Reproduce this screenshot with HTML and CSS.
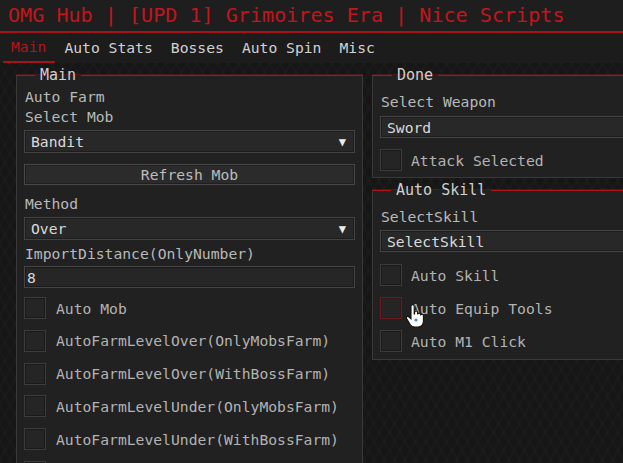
FILE: index.html
```html
<!DOCTYPE html>
<html>
<head>
<meta charset="utf-8">
<link rel="stylesheet" href="styles.css">
</head>
<body>
<div class="app">
  <header class="titlebar">OMG Hub | [UPD 1] Grimoires Era | Nice Scripts</header>
  <nav class="tabs">
    <span class="tab active">Main</span>
    <span class="tab">Auto Stats</span>
    <span class="tab">Bosses</span>
    <span class="tab">Auto Spin</span>
    <span class="tab">Misc</span>
  </nav>
  <main class="content">
    <fieldset class="panel panel-main">
      <legend class="legend">Main</legend>
      <div class="label">Auto Farm</div>
      <div class="label">Select Mob</div>
      <div class="dropdown mt3"><span>Bandit</span><span class="arrow">&#9660;</span></div>
      <div class="button mt11">Refresh Mob</div>
      <div class="label mt9">Method</div>
      <div class="dropdown mt3"><span>Over</span><span class="arrow">&#9660;</span></div>
      <div class="label mt4">ImportDistance(OnlyNumber)</div>
      <div class="input mt2">8</div>
      <div class="checklist mt9">
        <div class="check"><span class="box"></span><span>Auto Mob</span></div>
        <div class="check"><span class="box"></span><span>AutoFarmLevelOver(OnlyMobsFarm)</span></div>
        <div class="check"><span class="box"></span><span>AutoFarmLevelOver(WithBossFarm)</span></div>
        <div class="check"><span class="box"></span><span>AutoFarmLevelUnder(OnlyMobsFarm)</span></div>
        <div class="check"><span class="box"></span><span>AutoFarmLevelUnder(WithBossFarm)</span></div>
        <div class="check"><span class="box"></span></div>
      </div>
    </fieldset>
    <div class="col-right">
      <fieldset class="panel panel-done">
        <legend class="legend legend-done">Done</legend>
        <div class="label">Select Weapon</div>
        <div class="dropdown mt4 short"><span>Sword</span></div>
        <div class="checklist mt11">
          <div class="check"><span class="box"></span><span>Attack Selected</span></div>
        </div>
      </fieldset>
      <fieldset class="panel panel-skill">
        <legend class="legend">Auto Skill</legend>
        <div class="label">SelectSkill</div>
        <div class="dropdown mt3 short"><span>SelectSkill</span></div>
        <div class="checklist mt12">
          <div class="check"><span class="box"></span><span>Auto Skill</span></div>
          <div class="check hover"><span class="box"></span><span>Auto Equip Tools</span>
            <svg class="cursor" width="20" height="26" viewBox="0 0 20 26">
              <path d="M6 2.2a1.6 1.6 0 0 1 3.2 0V10h.4V8.4a1.5 1.5 0 0 1 3 0V10.6a1.5 1.5 0 0 1 3 0v1a1.4 1.4 0 0 1 2.8 0V17c0 3.5-2.2 6-5.6 6h-3.2c-2.2 0-3.4-1-4.6-2.8L1.6 14.6c-.9-1.3.7-2.8 2-1.8L6 14.8Z" fill="#ffffff" stroke="#111" stroke-width="1.1"/>
              <circle cx="11" cy="16" r="1.6" fill="#3a8fd0"/>
            </svg>
          </div>
          <div class="check"><span class="box"></span><span>Auto M1 Click</span></div>
        </div>
      </fieldset>
    </div>
  </main>
</div>
</body>
</html>
```
FILE: styles.css
```css
html, body {
  margin: 0;
  padding: 0;
  overflow: hidden;
  background: #171717;
}
body {
  font-family: "DejaVu Sans Mono", "Liberation Mono", monospace;
  font-size: 14.7px;
  color: #b8b8b8;
}
.app {
  width: 623px;
  height: 463px;
  overflow: hidden;
  background:
    repeating-linear-gradient(60deg, rgba(255,255,255,0.012) 0 3px, rgba(0,0,0,0) 3px 9px),
    repeating-linear-gradient(-60deg, rgba(255,255,255,0.012) 0 3px, rgba(0,0,0,0) 3px 9px),
    #161616;
}
.titlebar {
  height: 31px;
  line-height: 31px;
  padding-left: 8px;
  font-size: 20.1px;
  color: #c4151d;
  background: #1e1e1e;
  border-bottom: 2px solid #a8121a;
  white-space: nowrap;
}
.tabs {
  display: flex;
  height: 30px;
  padding-left: 3px;
  background: #1c1c1c;
}
.tab {
  padding: 0 9px 0 8px;
  line-height: 30px;
  color: #d2d2d2;
  white-space: nowrap;
}
.tab.active {
  color: #b3141c;
  line-height: 28px;
  border-bottom: 2px solid #a8121a;
}
.tab + .tab {
  margin-left: 1px;
}
.content {
  display: flex;
  gap: 9px;
  padding: 4px 0 0 16px;
  align-items: flex-start;
}
.panel {
  margin: 0;
  border: 1px solid #393939;
  border-top: 1px solid #b3141c;
  background: #212121;
  box-shadow: 0 -1px 0 rgba(179,20,28,0.35);
  display: flex;
  flex-direction: column;
  min-width: 0;
}
.panel-main {
  flex: none;
  width: 347px;
  box-sizing: border-box;
  padding: 4px 7px 8px 7px;
}
.col-right {
  flex: none;
  display: flex;
  flex-direction: column;
  gap: 4px;
}
.panel-done, .panel-skill {
  width: 360px;
  box-sizing: border-box;
  padding: 9px 7px 6px 7px;
}
.panel-skill {
  padding-bottom: 7px;
}
.legend {
  margin-left: 11px;
  padding: 0 5px;
  line-height: 16px;
  height: 16px;
  color: #d0d0d0;
  font-size: 15px;
}
.legend-done {
  margin-left: 12px;
}
.label {
  line-height: 20px;
  height: 20px;
  padding-left: 1px;
  color: #b9b9b9;
  white-space: nowrap;
}
.mt2 { margin-top: 2px; }
.mt3 { margin-top: 3px; }
.mt4 { margin-top: 4px; }
.mt9 { margin-top: 9px; }
.mt11 { margin-top: 11px; }
.mt12 { margin-top: 12px; }
.dropdown {
  height: 23px;
  box-sizing: border-box;
  display: flex;
  align-items: center;
  justify-content: space-between;
  padding: 0 8px 0 6px;
  background: #282828;
  border: 1px solid #434343;
  box-shadow: inset 0 0 0 1px #1d1d1d;
  color: #dadada;
}
.dropdown.short {
  height: 22px;
}
.arrow {
  font-size: 12px;
  color: #ececec;
}
.button {
  height: 21px;
  box-sizing: border-box;
  display: flex;
  align-items: center;
  justify-content: center;
  background: #2b2b2b;
  border: 1px solid #474747;
  box-shadow: inset 0 0 0 1px #1f1f1f;
  color: #bdbdbd;
}
.input {
  height: 22px;
  box-sizing: border-box;
  display: flex;
  align-items: center;
  padding-left: 2px;
  background: #262626;
  border: 1px solid #444;
  box-shadow: inset 0 0 0 1px #1b1b1b;
  color: #d6d6d6;
}
.checklist {
  display: flex;
  flex-direction: column;
  gap: 10.8px;
}
.panel-done .checklist, .panel-skill .checklist {
  gap: 11px;
}
.check {
  position: relative;
  display: flex;
  align-items: center;
  gap: 10px;
  height: 22px;
  white-space: nowrap;
  color: #b3b3b3;
}
.col-right .check {
  gap: 9px;
}
.box {
  width: 22px;
  height: 22px;
  box-sizing: border-box;
  flex: none;
  background: #252525;
  border: 1px solid #3c3c3c;
  box-shadow: inset 0 0 0 1px #1a1a1a;
}
.check.hover .box {
  border-color: #6e1a20;
  box-shadow: inset 0 0 0 1px #3a1416;
}
.cursor {
  position: absolute;
  left: 25px;
  top: 7px;
}
```
